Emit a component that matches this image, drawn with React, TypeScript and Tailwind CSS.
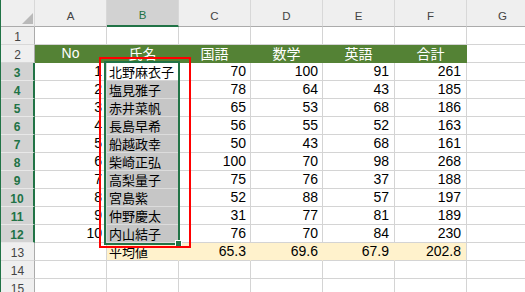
const cols = ["A", "B", "C", "D", "E", "F", "G"];
const heads = ["No", "氏名", "国語", "数学", "英語", "合計"];
const rows: [number, string, number, number, number, number][] = [
  [1, "北野麻衣子", 70, 100, 91, 261],
  [2, "塩見雅子", 78, 64, 43, 185],
  [3, "赤井菜帆", 65, 53, 68, 186],
  [4, "長島早希", 56, 55, 52, 163],
  [5, "船越政幸", 50, 43, 68, 161],
  [6, "柴崎正弘", 100, 70, 98, 268],
  [7, "高梨量子", 75, 76, 37, 188],
  [8, "宮島紫", 52, 88, 57, 197],
  [9, "仲野慶太", 31, 77, 81, 189],
  [10, "内山結子", 76, 70, 84, 230],
];
const avg = ["65.3", "69.6", "67.9", "202.8"];

const cell = "flex items-center overflow-hidden whitespace-nowrap border-r border-b border-[#d4d4d4]";
const num = "text-[14px] font-['Liberation_Sans',sans-serif]";
const numPad = ["pr-[4px]", "pr-[4px]", "pr-[5px]", "pr-[5px]"];

function RowHead({ n }: { n: number }) {
  const sel = n >= 3 && n <= 12;
  return (
    <div
      className={
        sel
          ? "flex items-center justify-center pt-[2px] bg-[#d2d2d2] text-[12px] font-bold text-[#217346] border-b border-b-[#e8e8e8] border-r-2 border-r-[#217346] font-['Liberation_Sans',sans-serif]"
          : "flex items-center justify-center pt-[2px] bg-[#efefef] text-[12px] text-[#444] border-b border-b-[#d8d8d8] border-r border-r-[#ababab] font-['Liberation_Sans',sans-serif]"
      }
    >
      {n}
    </div>
  );
}

export default function App() {
  return (
    <div className="w-[525px] h-[292px] overflow-hidden bg-white flex">
      <div className="w-px shrink-0 bg-[#217346]" />
      <div className="relative">
        <div className="grid grid-cols-[34px_repeat(7,72px)] grid-rows-[27px_repeat(15,18px)] text-[13px] text-black font-['Noto_Sans_CJK_JP',sans-serif]">
          {/* header row */}
          <div className="relative bg-[#efefef] border-r border-r-[#d8d8d8] border-b border-b-[#ababab]">
            <svg className="absolute left-[21px] top-[13px]" width="11" height="11" viewBox="0 0 11 11">
              <polygon points="11,0 11,11 0,11" fill="#b9b9b9" />
            </svg>
          </div>
          {cols.map((c) =>
            c === "B" ? (
              <div
                key={c}
                className="flex items-center justify-center pt-[6px] bg-[#d2d2d2] text-[11.5px] text-[#217346] border-r border-r-[#d8d8d8] border-b-2 border-b-[#217346] font-['Liberation_Sans',sans-serif]"
              >
                {c}
              </div>
            ) : (
              <div
                key={c}
                className="flex items-center justify-center pt-[7px] bg-[#efefef] text-[11.5px] text-[#444] border-r border-r-[#d8d8d8] border-b border-b-[#ababab] font-['Liberation_Sans',sans-serif]"
              >
                {c}
              </div>
            )
          )}

          {/* row 1 */}
          <RowHead n={1} />
          {cols.map((c) => (
            <div key={c} className={cell} />
          ))}

          {/* row 2 – table header */}
          <RowHead n={2} />
          {heads.map((h) => (
            <div
              key={h}
              className={`flex items-center justify-center bg-[#548235] text-white border-r border-b border-[#548235] ${
                h === "No" ? num : "text-[14px]"
              }`}
            >
              {h}
            </div>
          ))}
          <div className={cell} />

          {/* data rows */}
          {rows.map((r, i) => (
            <div key={r[0]} className="contents">
              <RowHead n={i + 3} />
              <div className={`${cell} ${num} justify-end pr-[4px]`}>{r[0]}</div>
              <div className={`${cell} pl-[2px] ${i === 0 ? "bg-white" : "bg-[#c6c6c6] border-b-[#dcdcdc]"}`}>{r[1]}</div>
              {r.slice(2).map((v, j) => (
                <div key={j} className={`${cell} ${num} justify-end ${numPad[j]}`}>
                  {v}
                </div>
              ))}
              <div className={cell} />
            </div>
          ))}

          {/* row 13 – averages */}
          <RowHead n={13} />
          <div className={cell} />
          <div className="flex items-center pl-[2px] bg-[#fff2cc] border-r border-r-[#fff2cc] border-b border-b-[#d4d4d4]">
            平均値
          </div>
          {avg.map((v, j) => (
            <div
              key={v}
              className={`flex items-center justify-end ${num} ${numPad[j]} bg-[#fff2cc] border-b border-b-[#d4d4d4] border-r ${
                j === 3 ? "border-r-[#d4d4d4]" : "border-r-[#fff2cc]"
              }`}
            >
              {v}
            </div>
          ))}
          <div className={cell} />

          {/* empty rows */}
          {[14, 15].map((n) => (
            <div key={n} className="contents">
              <RowHead n={n} />
              {cols.map((c) => (
                <div key={c} className={cell} />
              ))}
            </div>
          ))}
        </div>

        {/* selection B3:B12 */}
        <div className="pointer-events-none absolute left-[103px] top-[61px] w-[76px] h-[184px] border-2 border-[#217346]" />
        <div className="pointer-events-none absolute left-[174px] top-[240px] w-[7px] h-[7px] bg-[#217346] border border-white" />
        {/* red annotation box */}
        <div className="pointer-events-none absolute left-[98px] top-[57px] w-[92px] h-[191px] border-2 border-[#ff0000]" />
      </div>
    </div>
  );
}
